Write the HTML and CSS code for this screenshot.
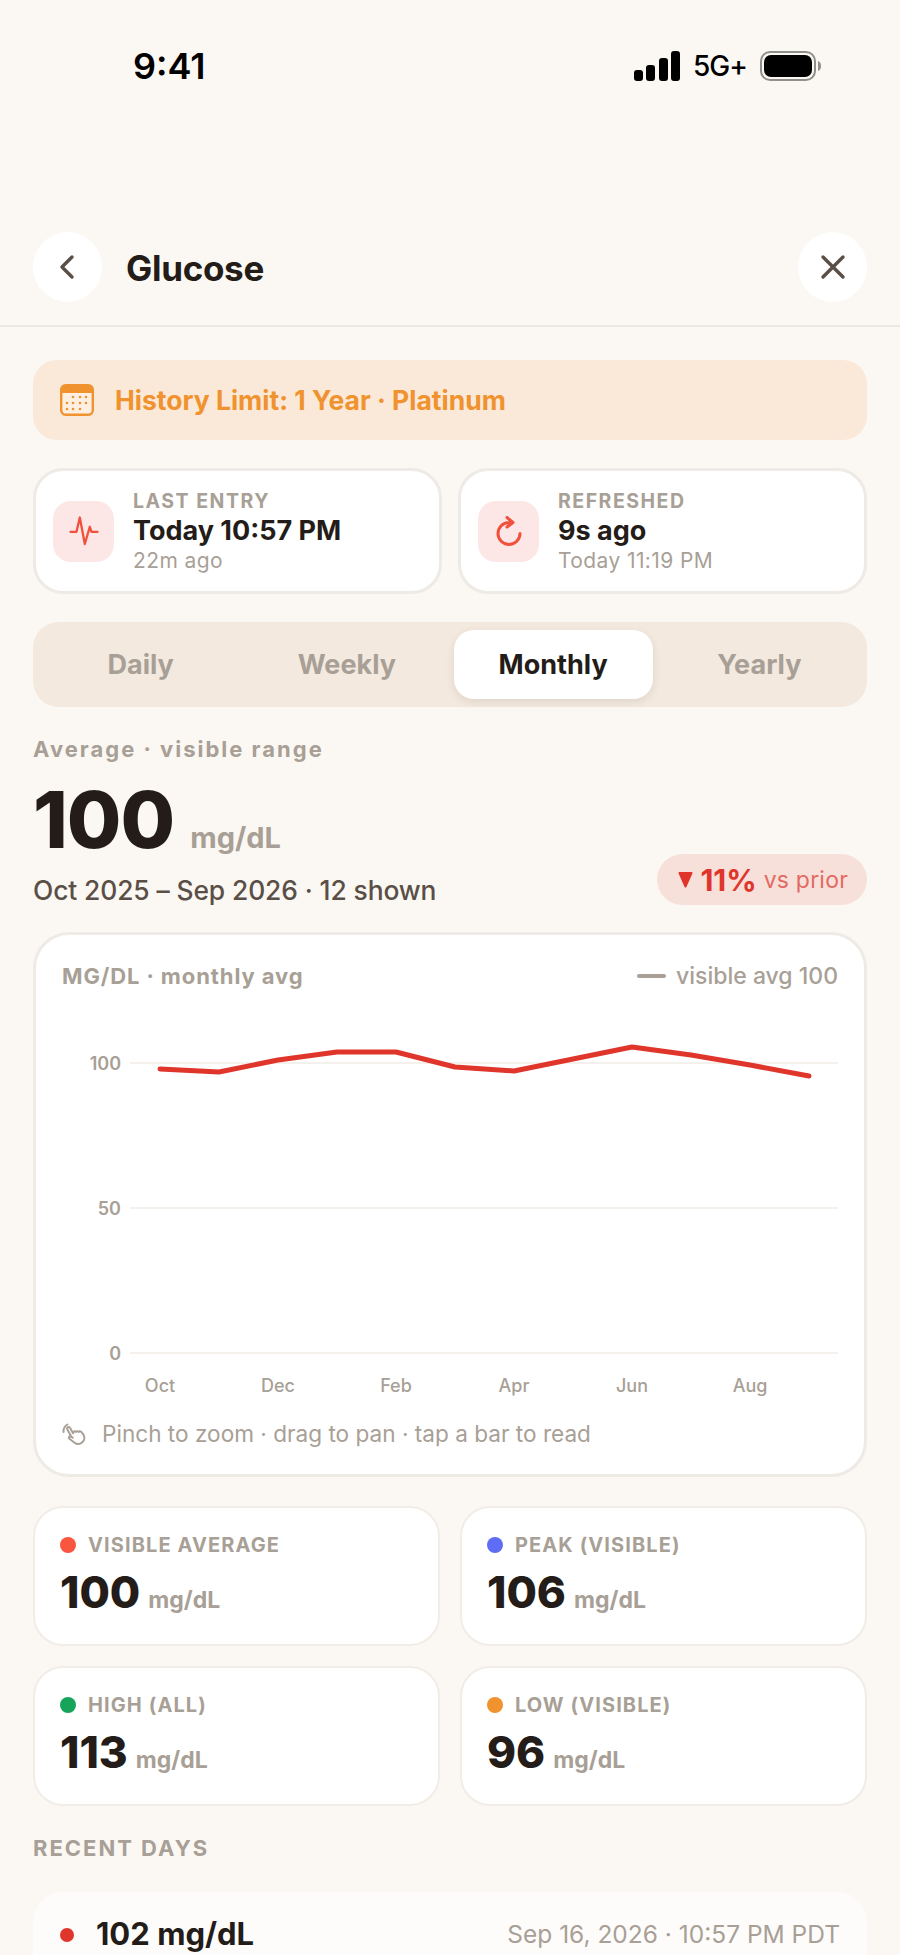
FILE: index.html
```html
<!DOCTYPE html>
<html>
<head>
    <title>Glucose</title>
    <link rel="stylesheet" href="styles.css">
</head>
<body>
    <div class="page">
        <div class="status-bar">
            <span class="clock">9:41</span>
            <div class="status-icons">
                <svg class="signal" width="46" height="30" viewBox="0 0 46 30">
                    <rect x="0" y="19" width="9" height="11" rx="3"/>
                    <rect x="12" y="14" width="9" height="16" rx="3"/>
                    <rect x="25" y="7" width="9" height="23" rx="3"/>
                    <rect x="37" y="0" width="9" height="30" rx="3"/>
                </svg>
                <span class="network">5G+</span>
                <svg class="battery" width="62" height="30" viewBox="0 0 62 30">
                    <rect x="1" y="1" width="54" height="28" rx="9" fill="none" stroke="#8f8f8c" stroke-width="2"/>
                    <rect x="4" y="4" width="48" height="22" rx="7"/>
                    <path d="M58 10c2 .6 3 2.6 3 5s-1 4.4-3 5z" fill="#8f8f8c"/>
                </svg>
            </div>
        </div>

        <div class="nav">
            <button class="round-btn">
                <svg width="26" height="26" viewBox="0 0 26 26"><path d="M17 3 7 13l10 10" fill="none" stroke="#5a4f47" stroke-width="3.4" stroke-linecap="round" stroke-linejoin="round"/></svg>
            </button>
            <h1 class="nav-title">Glucose</h1>
            <button class="round-btn">
                <svg width="26" height="26" viewBox="0 0 26 26"><path d="M3 3l20 20M23 3 3 23" fill="none" stroke="#5a4f47" stroke-width="3.4" stroke-linecap="round"/></svg>
            </button>
        </div>

        <div class="content">
            <div class="banner">
                <svg width="34" height="32" viewBox="0 0 34 32">
                    <rect x="1.2" y="1.2" width="31.6" height="29.6" rx="4.5" fill="#fdf0e3" stroke="#f0922e" stroke-width="2.4"/>
                    <path d="M5 1h24a4 4 0 0 1 4 4v4H1V5a4 4 0 0 1 4-4z" fill="#f0922e"/>
                    <g fill="#f0922e">
                        <circle cx="13" cy="13" r="1.3"/><circle cx="20" cy="13" r="1.3"/><circle cx="26" cy="13" r="1.3"/>
                        <circle cx="7" cy="19" r="1.3"/><circle cx="13" cy="19" r="1.3"/><circle cx="20" cy="19" r="1.3"/><circle cx="26" cy="19" r="1.3"/>
                        <circle cx="7" cy="25" r="1.3"/><circle cx="13" cy="25" r="1.3"/><circle cx="20" cy="25" r="1.3"/>
                    </g>
                </svg>
                <span>History Limit: 1 Year · Platinum</span>
            </div>

            <div class="info-row">
                <div class="info-card">
                    <div class="info-icon">
                        <svg width="30" height="30" viewBox="0 0 30 30"><path d="M1.5 15.8h6L10.8 1.500l5 26.500 5-17.200 1.700 5h6" fill="none" stroke="#f0503c" stroke-width="2.3" stroke-linecap="round" stroke-linejoin="round"/></svg>
                    </div>
                    <div class="info-text">
                        <div class="info-label">LAST ENTRY</div>
                        <div class="info-value">Today 10:57 PM</div>
                        <div class="info-sub">22m ago</div>
                    </div>
                </div>
                <div class="info-card">
                    <div class="info-icon">
                        <svg width="30" height="30" viewBox="0 0 30 30"><path d="M15 6.5A11 11 0 1 0 26 17.5M13 1.500l6 5-6 4.500" fill="none" stroke="#f0503c" stroke-width="3" stroke-linecap="round" stroke-linejoin="round"/></svg>
                    </div>
                    <div class="info-text">
                        <div class="info-label">REFRESHED</div>
                        <div class="info-value">9s ago</div>
                        <div class="info-sub">Today 11:19 PM</div>
                    </div>
                </div>
            </div>

            <div class="tabs">
                <div class="tab">Daily</div>
                <div class="tab">Weekly</div>
                <div class="tab active">Monthly</div>
                <div class="tab">Yearly</div>
            </div>

            <div class="avg-label">Average · visible range</div>
            <div class="avg-number">100<span class="avg-unit">mg/dL</span></div>
            <div class="avg-foot">
                <div class="avg-range">Oct 2025 – Sep 2026 · 12 shown</div>
                <div class="pill">
                    <svg width="15" height="17" viewBox="0 0 15 17"><path d="M1.5 2h12L7.5 15.5z" fill="#e0352b" stroke="#e0352b" stroke-width="2" stroke-linejoin="round"/></svg>
                    <b>11%</b><span>vs prior</span>
                </div>
            </div>

            <div class="chart-card">
                <div class="chart-head">
                    <span class="chart-title">MG/DL · monthly avg</span>
                    <span class="chart-legend"><i class="legend-line"></i>visible avg 100</span>
                </div>
                <svg class="chart" width="776" height="380" viewBox="62 1020 776 380">
                    <g stroke="#f4f1ed" stroke-width="2">
                        <line x1="130" y1="1063" x2="838" y2="1063"/>
                        <line x1="130" y1="1208" x2="838" y2="1208"/>
                        <line x1="130" y1="1353" x2="838" y2="1353"/>
                    </g>
                    <g text-anchor="end">
                        <text x="121" y="1070">100</text>
                        <text x="121" y="1215">50</text>
                        <text x="121" y="1360">0</text>
                    </g>
                    <g class="x-labels" text-anchor="middle">
                        <text x="160" y="1392">Oct</text>
                        <text x="278" y="1392">Dec</text>
                        <text x="396" y="1392">Feb</text>
                        <text x="514" y="1392">Apr</text>
                        <text x="632" y="1392">Jun</text>
                        <text x="750" y="1392">Aug</text>
                    </g>
                    <polyline points="160,1069 219,1072 278,1060 337,1052 396,1052 455,1067 514,1071 573,1059 632,1047 691,1055 750,1065 809,1076" fill="none" stroke="#e0352b" stroke-width="5" stroke-linecap="round" stroke-linejoin="round"/>
                </svg>
                <div class="chart-hint">
                    <svg width="26" height="26" viewBox="0 0 26 26" fill="none" stroke="#a89f96" stroke-width="2" stroke-linecap="round" stroke-linejoin="round">
                        <g transform="rotate(-22 14 14)">
                            <path d="M9 13 8 5.5a1.600 1.600 0 0 1 3.200-.3l.8 6 1-.8a1.500 1.500 0 0 1 2 .2l.4.7a1.500 1.500 0 0 1 2 .2l.5.7a1.500 1.500 0 0 1 2 .6l1 3c.8 3.300-.8 6.300-3.800 7.300-2.800 1-5.800 0-7.300-2.500L6.500 15c-.8-1.500 1-2.800 2-1.500l1.500 1.800"/>
                        </g>
                        <path d="M1.5 11C1.300 8 2.800 5 5.500 3.500"/>
                    </svg>
                    <span>Pinch to zoom · drag to pan · tap a bar to read</span>
                </div>
            </div>

            <div class="stats">
                <div class="stat">
                    <div class="stat-label"><i class="dot dot-red"></i>VISIBLE AVERAGE</div>
                    <div class="stat-value">100<span>mg/dL</span></div>
                </div>
                <div class="stat">
                    <div class="stat-label"><i class="dot dot-blue"></i>PEAK (VISIBLE)</div>
                    <div class="stat-value">106<span>mg/dL</span></div>
                </div>
                <div class="stat">
                    <div class="stat-label"><i class="dot dot-green"></i>HIGH (ALL)</div>
                    <div class="stat-value">113<span>mg/dL</span></div>
                </div>
                <div class="stat">
                    <div class="stat-label"><i class="dot dot-orange"></i>LOW (VISIBLE)</div>
                    <div class="stat-value">96<span>mg/dL</span></div>
                </div>
            </div>

            <div class="section-title">RECENT DAYS</div>
            <div class="recent">
                <i class="recent-dot"></i>
                <span class="recent-value">102 mg/dL</span>
                <span class="recent-date">Sep 16, 2026 · 10:57 PM PDT</span>
            </div>
        </div>
    </div>
</body>
</html>
```

FILE: styles.css
```css
* {
    box-sizing: border-box;
}

body {
    margin: 0;
    background-color: #fbf8f3;
    font-family: Inter, "Liberation Sans", sans-serif;
    color: #231c18;
}

.page {
    height: 1955px;
    overflow: hidden;
}

.status-bar {
    display: flex;
    justify-content: space-between;
    align-items: center;
    height: 132px;
    padding: 0 78px 0 133px;
}

.clock {
    font-size: 36px;
    font-weight: 600;
    color: #000;
}

.status-icons {
    display: flex;
    align-items: center;
    gap: 13px;
    color: #000;
}

.network {
    font-size: 28px;
    font-weight: 500;
    letter-spacing: -1px;
}

.nav {
    display: flex;
    align-items: flex-end;
    height: 195px;
    padding: 0 33px 23px;
    border-bottom: 2px solid #ece8e2;
}

.round-btn {
    display: flex;
    align-items: center;
    justify-content: center;
    width: 69px;
    height: 70px;
    padding: 0;
    border: none;
    border-radius: 50%;
    background-color: #fff;
}

.nav-title {
    flex: 1;
    align-self: center;
    margin: 101px 0 0 24px;
    font-size: 35px;
    font-weight: 700;
    letter-spacing: -0.3px;
}

.content {
    padding: 33px 33px 0;
}

.banner {
    display: flex;
    align-items: center;
    gap: 21px;
    height: 80px;
    padding-left: 27px;
    border-radius: 24px;
    background-color: #fae9d9;
    color: #f0922e;
    font-size: 26.5px;
    font-weight: 700;
}

.info-row {
    display: flex;
    gap: 16px;
    margin-top: 28px;
}

.info-card {
    display: flex;
    flex: 1;
    align-items: center;
    gap: 19px;
    height: 126px;
    padding-left: 17px;
    border: 3px solid #eeeae5;
    border-radius: 30px;
    background-color: #fff;
}

.info-icon {
    display: flex;
    align-items: center;
    justify-content: center;
    width: 61px;
    height: 61px;
    border-radius: 18px;
    background-color: #fde7e6;
}

.info-label {
    font-size: 19.5px;
    font-weight: 700;
    letter-spacing: 1.5px;
    line-height: 24px;
    color: #a89f96;
}

.info-value {
    font-size: 27px;
    font-weight: 700;
    line-height: 36px;
}

.info-sub {
    font-size: 21px;
    letter-spacing: 0.4px;
    line-height: 24px;
    color: #a89f96;
}

.tabs {
    display: flex;
    gap: 7px;
    height: 85px;
    margin-top: 28px;
    padding: 8px;
    border-radius: 26px;
    background-color: #f3e9df;
}

.tab {
    display: flex;
    flex: 1;
    align-items: center;
    justify-content: center;
    border-radius: 20px;
    font-size: 27px;
    font-weight: 700;
    color: #a89f96;
}

.tab.active {
    background-color: #fff;
    color: #231c18;
    box-shadow: 0 3px 8px rgba(90, 70, 50, 0.12);
}

.avg-label {
    margin-top: 28px;
    font-size: 22px;
    font-weight: 700;
    letter-spacing: 2px;
    line-height: 28px;
    color: #a89f96;
}

.avg-number {
    margin-top: 13px;
    font-size: 79px;
    font-weight: 800;
    line-height: 86px;
    letter-spacing: -1px;
}

.avg-unit {
    margin-left: 16px;
    font-size: 29px;
    font-weight: 700;
    letter-spacing: 0;
    color: #a89f96;
}

.avg-foot {
    display: flex;
    justify-content: space-between;
    align-items: flex-end;
    height: 53px;
    margin-top: -29px;
}

.avg-range {
    font-size: 26.4px;
    font-weight: 500;
    letter-spacing: -0.1px;
    line-height: 30px;
    color: #5a4f47;
}

.pill {
    display: flex;
    align-items: center;
    gap: 7px;
    height: 51px;
    padding: 0 19px 0 21px;
    border-radius: 26px;
    background-color: #f8e0da;
    font-size: 23px;
    letter-spacing: 0.2px;
    color: #e36a62;
}

.pill b {
    font-size: 30px;
    font-weight: 700;
    letter-spacing: 0;
    color: #e0352b;
}

.chart-card {
    height: 545px;
    margin-top: 27px;
    padding: 23px 26px 0;
    border: 3px solid #eeeae5;
    border-radius: 36px;
    background-color: #fff;
}

.chart-head {
    display: flex;
    justify-content: space-between;
    align-items: center;
    height: 36px;
    font-size: 22px;
    color: #a89f96;
}

.chart-title {
    font-weight: 700;
    letter-spacing: 0.9px;
}

.chart-legend {
    display: flex;
    align-items: center;
    gap: 10px;
    font-size: 23px;
    font-weight: 500;
}

.legend-line {
    width: 29px;
    height: 4px;
    border-radius: 2px;
    background-color: #a89f96;
}

.chart {
    display: block;
    margin-top: 26px;
}

.chart text {
    font-size: 18px;
    font-weight: 600;
    fill: #a89f96;
}

.chart .x-labels text {
    font-weight: 500;
}

.chart-hint {
    display: flex;
    align-items: center;
    gap: 14px;
    margin-top: 20px;
    font-size: 22.6px;
    color: #a89f96;
}

.stats {
    display: grid;
    grid-template-columns: 1fr 1fr;
    gap: 20px;
    margin-top: 29px;
}

.stat {
    height: 140px;
    padding: 23px 25px 0;
    border: 2px solid #f1ece6;
    border-radius: 30px;
    background-color: #fff;
}

.stat-label {
    display: flex;
    align-items: center;
    gap: 12px;
    font-size: 20px;
    font-weight: 700;
    letter-spacing: 1.1px;
    line-height: 28px;
    color: #a89f96;
}

.dot {
    width: 16px;
    height: 16px;
    border-radius: 50%;
}

.dot-red { background-color: #f9553f; }
.dot-blue { background-color: #5f6cf5; }
.dot-green { background-color: #16a35a; }
.dot-orange { background-color: #f0922e; }

.stat-value {
    margin-top: 5px;
    font-size: 44px;
    font-weight: 800;
    line-height: 56px;
    letter-spacing: 0;
}

.stat-value span {
    margin-left: 8px;
    font-size: 23px;
    font-weight: 700;
    color: #a89f96;
}

.section-title {
    margin-top: 28px;
    font-size: 22px;
    font-weight: 700;
    letter-spacing: 2px;
    line-height: 28px;
    color: #a89f96;
}

.recent {
    display: flex;
    align-items: flex-start;
    height: 63px;
    margin-top: 30px;
    padding: 24px 27px 0;
    border-radius: 30px 30px 0 0;
    background-color: #fdfcfa;
}

.recent-dot {
    width: 14px;
    height: 14px;
    margin: 12px 22px 0 0;
    border-radius: 50%;
    background-color: #e0352b;
}

.recent-value {
    flex: 1;
    font-size: 31px;
    font-weight: 700;
    line-height: 36px;
}

.recent-date {
    font-size: 24.5px;
    line-height: 36px;
    color: #a89f96;
}
```
